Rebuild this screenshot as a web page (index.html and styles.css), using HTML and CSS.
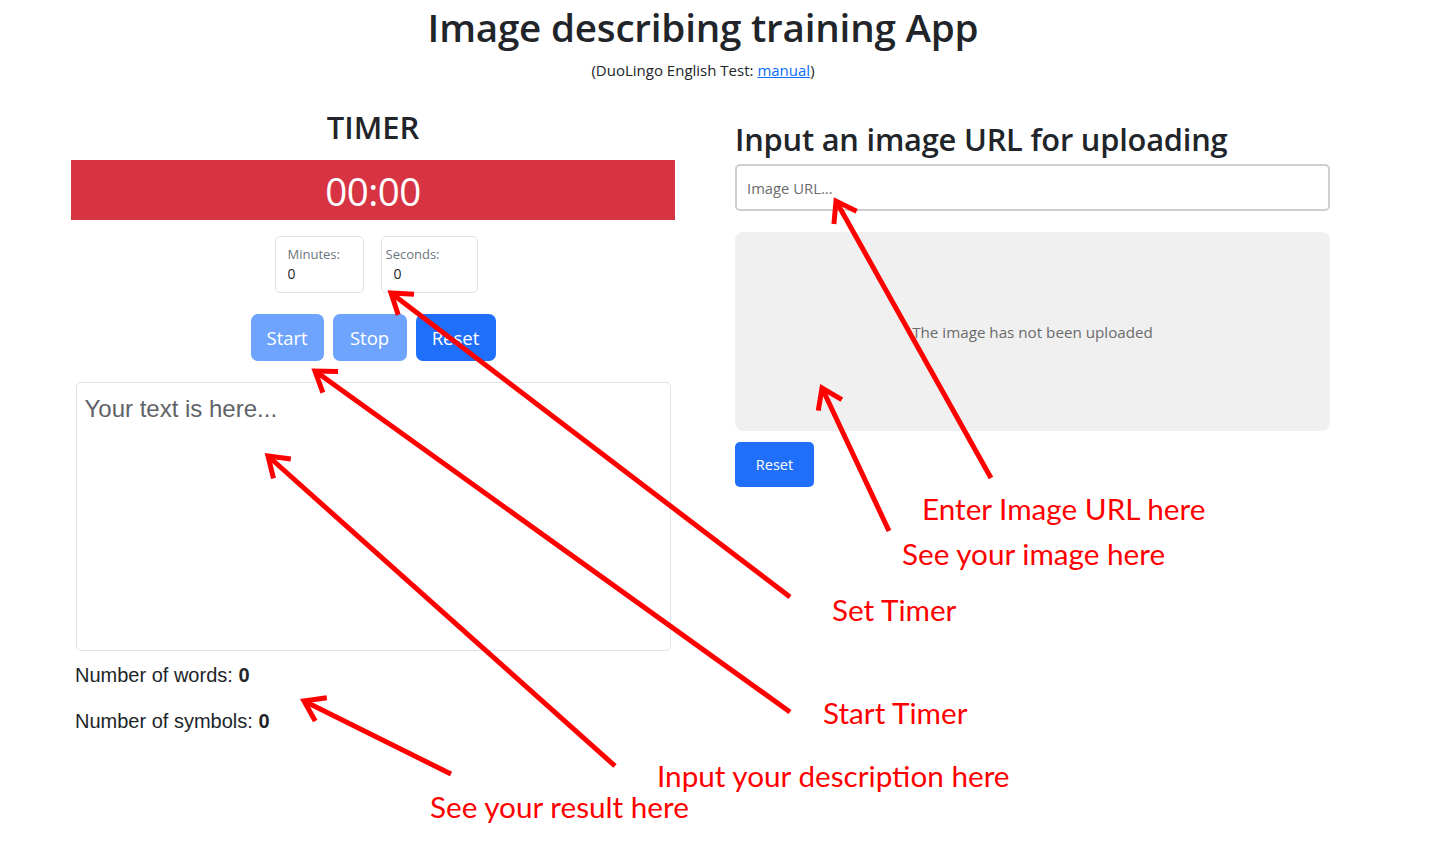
FILE: index.html
```html
<!DOCTYPE html>
<html lang="en">
<head>
<meta charset="utf-8">
<title>Image describing training App</title>
<link rel="stylesheet" href="styles.css">
</head>
<body>
<div class="page">
  <header class="header">
    <h1 class="title">Image describing training App</h1>
    <p class="subtitle">(DuoLingo English Test: <a href="#" class="link">manual</a>)</p>
  </header>

  <main class="columns">
    <section class="col-left">
      <h2 class="timer-title">TIMER</h2>
      <div class="timer-bar">00:00</div>
      <div class="time-inputs">
        <div class="time-box time-box-min">
          <span class="time-label">Minutes:</span>
          <span class="time-value">0</span>
        </div>
        <div class="time-box time-box-sec">
          <span class="time-label">Seconds:</span>
          <span class="time-value time-value-sec">0</span>
        </div>
      </div>
      <div class="btn-row">
        <button class="btn btn-lg btn-disabled">Start</button>
        <button class="btn btn-lg btn-disabled">Stop</button>
        <button class="btn btn-lg btn-primary">Reset</button>
      </div>
      <textarea class="text-area" placeholder="Your text is here..."></textarea>
      <p class="count">Number of words: <b>0</b></p>
      <p class="count count-second">Number of symbols: <b>0</b></p>
    </section>

    <section class="col-right">
      <h2 class="upload-title">Input an image URL for uploading</h2>
      <input class="url-input" type="text" placeholder="Image URL...">
      <div class="image-box">The image has not been uploaded</div>
      <button class="btn btn-primary btn-sm-reset">Reset</button>
    </section>
  </main>

  <div class="annotations">
    <svg class="arrows" width="1448" height="866" viewBox="0 0 1448 866">
      <defs>
        <marker id="head" markerUnits="userSpaceOnUse" markerWidth="40" markerHeight="40" viewBox="-30 -20 40 40" refX="0" refY="0" orient="auto" overflow="visible">
          <path d="M -19 -13 L 0 0 L -19 13" fill="none" stroke="#ff0000" stroke-width="5" stroke-linejoin="miter"/>
        </marker>
      </defs>
      <g stroke="#ff0000" stroke-width="5" fill="none" marker-end="url(#head)">
        <line x1="790" y1="597" x2="391" y2="293"/>
        <line x1="790" y1="712" x2="315" y2="371"/>
        <line x1="615" y1="766" x2="268" y2="456"/>
        <line x1="451" y1="774" x2="304" y2="701"/>
        <line x1="991" y1="478" x2="836" y2="201"/>
        <line x1="889" y1="531" x2="822" y2="388"/>
      </g>
    </svg>
    <span class="note note-url">Enter Image URL here</span>
    <span class="note note-image">See your image here</span>
    <span class="note note-set">Set Timer</span>
    <span class="note note-start">Start Timer</span>
    <span class="note note-desc">Input your description here</span>
    <span class="note note-result">See your result here</span>
  </div>
</div>
</body>
</html>
```

FILE: styles.css
```css
* { box-sizing: border-box; }

html, body {
  margin: 0;
  padding: 0;
  background: #ffffff;
}

body {
  font-family: "Open Sans", "Noto Sans", sans-serif;
  color: #212529;
  width: 1448px;
  height: 866px;
  overflow: hidden;
}

.page {
  position: relative;
  width: 1448px;
  height: 866px;
}

.header {
  width: 1406px;
  text-align: center;
  padding-top: 4px;
}

.title {
  margin: 0;
  font-size: 38.6px;
  line-height: 46px;
  font-weight: 600;
  letter-spacing: -0.2px;
}

.subtitle {
  margin: 10px 0 0;
  font-size: 15px;
  line-height: 20px;
}

.link {
  color: #0d6efd;
  text-decoration: underline;
}

.columns {
  display: flex;
  gap: 60px;
  padding-left: 71px;
  margin-top: 28px;
}

.col-left {
  width: 604px;
  display: flex;
  flex-direction: column;
  align-items: center;
}

.timer-title {
  margin: 0;
  font-size: 31px;
  line-height: 38px;
  font-weight: 600;
}

.timer-bar {
  margin-top: 14px;
  width: 100%;
  height: 60px;
  background: #d63343;
  color: #ffffff;
  font-size: 38.5px;
  font-weight: 400;
  display: flex;
  align-items: center;
  justify-content: center;
  letter-spacing: -0.5px;
  padding-top: 2px;
}

.time-inputs {
  margin-top: 16px;
  margin-left: 6px;
  display: flex;
  gap: 17px;
}

.time-box {
  height: 57px;
  border: 1px solid #dee2e6;
  border-radius: 5px;
  display: flex;
  flex-direction: column;
  padding-top: 8px;
}

.time-box-min {
  width: 89px;
  padding-left: 12px;
}

.time-box-sec {
  width: 97px;
  padding-left: 4px;
}

.time-label {
  font-size: 13px;
  line-height: 18px;
  color: #6c757d;
}

.time-value {
  font-size: 14px;
  line-height: 22px;
  color: #212529;
}

.time-value-sec {
  padding-left: 8px;
}

.btn-row {
  margin-top: 21px;
  display: flex;
  gap: 9px;
}

.btn {
  font-family: "Open Sans", "Noto Sans", sans-serif;
  border: none;
  color: #ffffff;
  cursor: pointer;
}

.btn-lg {
  height: 47px;
  font-size: 18.5px;
  border-radius: 7px;
  padding: 0 16px;
}

.btn-lg:nth-child(1) { width: 73px; }
.btn-lg:nth-child(2) { width: 74px; }
.btn-lg:nth-child(3) { width: 80px; }

.btn-disabled {
  background: #6ea4fd;
}

.btn-primary {
  background: #1f6ffb;
}

.text-area {
  margin-top: 21px;
  width: 595px;
  height: 269px;
  border: 1px solid #dee2e6;
  border-radius: 5px;
  padding: 11px 8px;
  resize: none;
  font-family: "Liberation Sans", Arial, sans-serif;
  font-size: 24px;
  line-height: 29px;
  color: #212529;
}

.text-area::placeholder {
  color: #5f6368;
}

.count {
  align-self: flex-start;
  margin: 12px 0 0 4px;
  font-family: "Liberation Sans", Arial, sans-serif;
  font-size: 20px;
  line-height: 24px;
  color: #212529;
}

.count b {
  font-weight: 700;
}

.count-second {
  margin-top: 22px;
}

.col-right {
  width: 595px;
  display: flex;
  flex-direction: column;
  align-items: flex-start;
  padding-top: 12px;
}

.upload-title {
  margin: 0;
  font-size: 30.8px;
  line-height: 38px;
  font-weight: 600;
  letter-spacing: -0.2px;
}

.url-input {
  margin-top: 6px;
  width: 595px;
  height: 47px;
  border: 2px solid #cfcfcf;
  border-radius: 5px;
  padding: 0 10px;
  font-family: "Open Sans", "Noto Sans", sans-serif;
  font-size: 14.8px;
  color: #212529;
}

.url-input::placeholder {
  color: #6c6c6c;
}

.image-box {
  margin-top: 21px;
  width: 595px;
  height: 199px;
  background: #f0f0f0;
  border-radius: 8px;
  display: flex;
  justify-content: center;
  padding-top: 89px;
  font-size: 15.2px;
  line-height: 22px;
  color: #6b6b6b;
}

.btn-sm-reset {
  margin-top: 11px;
  width: 79px;
  height: 45px;
  border-radius: 5px;
  font-size: 14.5px;
}

.annotations {
  position: absolute;
  inset: 0;
  pointer-events: none;
}

.arrows {
  position: absolute;
  top: 0;
  left: 0;
}

.note {
  position: absolute;
  font-family: "Lato", "Open Sans", sans-serif;
  font-size: 29.7px;
  line-height: 34px;
  color: #ff0000;
  white-space: nowrap;
}

.note-url { left: 922px; top: 492px; }
.note-image { left: 902px; top: 537px; }
.note-set { left: 832px; top: 593px; }
.note-start { left: 823px; top: 696px; }
.note-desc { left: 657px; top: 759px; }
.note-result { left: 430px; top: 790px; }
```
